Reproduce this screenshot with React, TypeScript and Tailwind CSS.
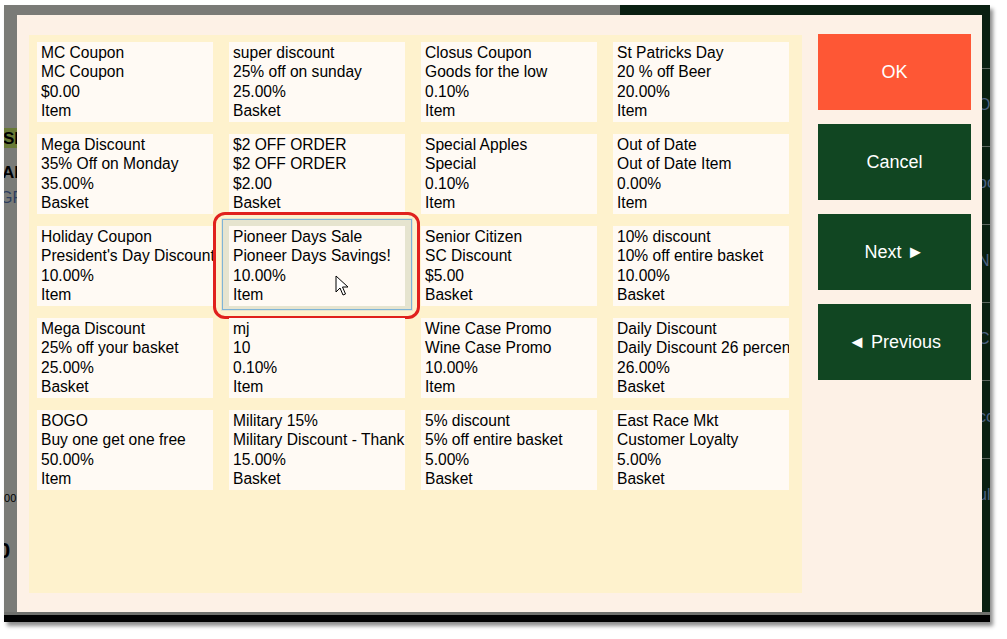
import React from 'react';

interface Discount {
  name: string;
  description: string;
  amount: string;
  scope: 'Item' | 'Basket';
}

const discounts: Discount[] = [
  { name: 'MC Coupon', description: 'MC Coupon', amount: '$0.00', scope: 'Item' },
  { name: 'super discount', description: '25% off on sunday', amount: '25.00%', scope: 'Basket' },
  { name: 'Closus Coupon', description: 'Goods for the low', amount: '0.10%', scope: 'Item' },
  { name: 'St Patricks Day', description: '20 % off Beer', amount: '20.00%', scope: 'Item' },
  { name: 'Mega Discount', description: '35% Off on Monday', amount: '35.00%', scope: 'Basket' },
  { name: '$2 OFF ORDER', description: '$2 OFF ORDER', amount: '$2.00', scope: 'Basket' },
  { name: 'Special Apples', description: 'Special', amount: '0.10%', scope: 'Item' },
  { name: 'Out of Date', description: 'Out of Date Item', amount: '0.00%', scope: 'Item' },
  { name: 'Holiday Coupon', description: "President's Day Discount", amount: '10.00%', scope: 'Item' },
  { name: 'Pioneer Days Sale', description: 'Pioneer Days Savings!', amount: '10.00%', scope: 'Item' },
  { name: 'Senior Citizen', description: 'SC Discount', amount: '$5.00', scope: 'Basket' },
  { name: '10% discount', description: '10% off entire basket', amount: '10.00%', scope: 'Basket' },
  { name: 'Mega Discount', description: '25% off your basket', amount: '25.00%', scope: 'Basket' },
  { name: 'mj', description: '10', amount: '0.10%', scope: 'Item' },
  { name: 'Wine Case Promo', description: 'Wine Case Promo', amount: '10.00%', scope: 'Item' },
  { name: 'Daily Discount', description: 'Daily Discount 26 percent', amount: '26.00%', scope: 'Basket' },
  { name: 'BOGO', description: 'Buy one get one free', amount: '50.00%', scope: 'Item' },
  { name: 'Military 15%', description: 'Military Discount - Thank you', amount: '15.00%', scope: 'Basket' },
  { name: '5% discount', description: '5% off entire basket', amount: '5.00%', scope: 'Basket' },
  { name: 'East Race Mkt', description: 'Customer Loyalty', amount: '5.00%', scope: 'Basket' },
];

const SELECTED = 9;

const Cursor = () => (
  <svg className="absolute left-[106px] top-[49px]" width="14" height="22" viewBox="0 0 14 22">
    <path d="M1 1 L1 17 L5 13 L8 20 L10.5 19 L7.5 12 L13 12 Z" fill="#ffffff" stroke="#000000" strokeWidth="1" strokeLinejoin="round" />
  </svg>
);

const DiscountCard: React.FC<{ d: Discount; selected: boolean }> = ({ d, selected }) => (
  <div className="relative h-[80px] w-[176px]">
    {selected && (
      <>
        <div className="absolute -left-[16px] -top-[14px] h-[107px] w-[207px] rounded-[12px] border-[3px] border-[#e0211d]" />
        <div className="absolute -left-[8px] -top-[8px] -right-[8px] -bottom-[5px] bg-[#e6e4cf]">
          <div className="absolute inset-[1px] border border-[#7fb4d6]" />
        </div>
      </>
    )}
    <div className="relative h-full w-full overflow-hidden bg-[#fffaf4] pl-[4px] pt-[1px] text-[15.6px] leading-[19.3px] text-black whitespace-nowrap">
      <div>{d.name}</div>
      <div>{d.description}</div>
      <div>{d.amount}</div>
      <div>{d.scope}</div>
      {selected && <Cursor />}
    </div>
  </div>
);

const buttons = [
  { label: 'OK', color: 'bg-[#fe5735]' },
  { label: 'Cancel', color: 'bg-[#114622]' },
  { label: 'Next ►', color: 'bg-[#114622]' },
  { label: '◄ Previous', color: 'bg-[#114622]' },
];

const rightMarks = ['O', 'oo', 'N', 'C', 'cc', 'ul'];

export default function App() {
  return (
    <div
      className="h-[639px] w-[1007px] overflow-hidden bg-white pl-[4px] pt-[5px]"
      style={{ fontFamily: '"Liberation Sans", Arial, sans-serif' }}
    >
      <div className="flex h-[617px] w-[986px] flex-col shadow-[3px_4px_4px_rgba(0,0,0,0.45)]">
        {/* strip of the app behind, top */}
        <div className="flex h-[10px]">
          <div className="w-[616px] bg-[#7a7b77]" />
          <div className="flex-1 bg-[#0a2012]" />
        </div>

        <div className="flex flex-1">
          {/* left strip */}
          <div className="w-[13px] overflow-hidden bg-[#7a7b77]">
            <div className="h-[113px]" />
            <div className="flex h-[20px] items-center overflow-hidden bg-[#697a36] text-[17px] font-bold leading-none text-black">
              <span className="-ml-[1px]">SI</span>
            </div>
            <div className="mt-[15px] -ml-[2px] text-[17px] font-bold leading-[20px] text-black">AI</div>
            <div className="mt-[5px] -ml-[4px] text-[16px] leading-[20px] text-[#2d3d5e]">GR</div>
            <div className="mt-[283px] -ml-[3px] text-[11px] leading-[14px] text-black">.00</div>
            <div className="mt-[34px] -ml-[6px] text-[22px] font-bold leading-[24px] text-black">0</div>
          </div>

          {/* dialog */}
          <div className="flex w-[965px] bg-[#fdf1e6] pl-[12px] pt-[20px]">
            <div className="h-[558px] w-[773px] bg-[#fef2cd] pl-[8px] pt-[7px]">
              <div className="grid grid-cols-[repeat(4,176px)] gap-x-[16px] gap-y-[12px]">
                {discounts.map((d, i) => (
                  <DiscountCard key={i} d={d} selected={i === SELECTED} />
                ))}
              </div>
            </div>

            <div className="-mt-[1px] ml-[16px] flex w-[153px] flex-col gap-[14px]">
              {buttons.map((b) => (
                <button
                  key={b.label}
                  className={`flex h-[76px] items-center justify-center ${b.color} text-[18px] text-white`}
                  style={{ fontFamily: '"Liberation Sans", "DejaVu Sans", sans-serif' }}
                >
                  {b.label}
                </button>
              ))}
            </div>
          </div>

          {/* right strip */}
          <div className="flex w-[8px] flex-col overflow-hidden bg-[#0a2012]">
            <div className="h-[53px]" />
            {rightMarks.map((m, i) => (
              <div key={i} className="h-[78px] border-t border-[#5d6660]">
                <div className="mt-[26px] -ml-[4px] text-[16px] leading-[20px] text-[#4d6282]">{m}</div>
              </div>
            ))}
          </div>
        </div>

        {/* bottom edge */}
        <div className="h-[10px] border-t-[3px] border-[#6f706c] bg-black" />
      </div>
    </div>
  );
}
